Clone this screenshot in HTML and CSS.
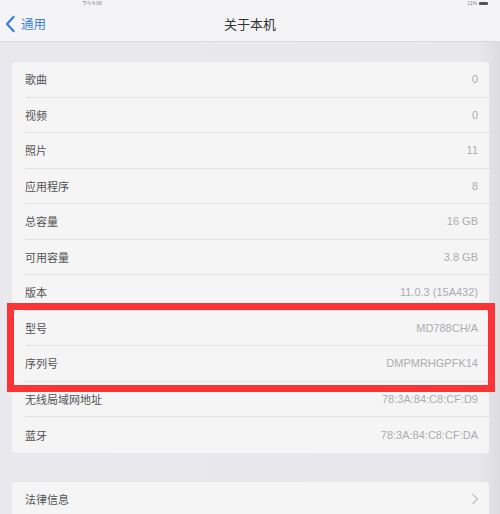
FILE: index.html
```html
<!DOCTYPE html>
<html lang="zh">
<head>
<meta charset="utf-8">
<link rel="stylesheet" href="styles.css">
</head>
<body>
<div class="screen">
  <div class="status">
    <span class="st-left">下午4:08</span>
    <span class="st-right">11% <i class="battery"></i></span>
  </div>
  <header class="nav">
    <div class="back">
      <svg class="chev" width="12" height="18" viewBox="0 0 12 18"><path d="M9.5 2 L3 9 L9.5 16" fill="none" stroke="#3f7fdc" stroke-width="2.4" stroke-linecap="round" stroke-linejoin="round"/></svg>
      <span>通用</span>
    </div>
    <div class="title">关于本机</div>
  </header>

  <section class="card">
    <div class="row"><span class="label">歌曲</span><span class="value">0</span></div>
    <div class="row"><span class="label">视频</span><span class="value">0</span></div>
    <div class="row"><span class="label">照片</span><span class="value">11</span></div>
    <div class="row"><span class="label">应用程序</span><span class="value">8</span></div>
    <div class="row"><span class="label">总容量</span><span class="value">16 GB</span></div>
    <div class="row"><span class="label">可用容量</span><span class="value">3.8 GB</span></div>
    <div class="row"><span class="label">版本</span><span class="value">11.0.3 (15A432)</span></div>
    <div class="row"><span class="label">型号</span><span class="value">MD788CH/A</span></div>
    <div class="row"><span class="label">序列号</span><span class="value">DMPMRHGPFK14</span></div>
    <div class="row"><span class="label">无线局域网地址</span><span class="value">78:3A:84:C8:CF:D9</span></div>
    <div class="row last"><span class="label">蓝牙</span><span class="value">78:3A:84:C8:CF:DA</span></div>
  </section>

  <section class="card card2">
    <div class="row last"><span class="label">法律信息</span>
      <svg class="arrow" width="8" height="12" viewBox="0 0 8 12"><path d="M2 1.5 L6.5 6 L2 10.5" fill="none" stroke="#c6c6ca" stroke-width="1.5" stroke-linecap="round" stroke-linejoin="round"/></svg>
    </div>
  </section>

  <div class="highlight"></div>
</div>
</body>
</html>
```

FILE: styles.css
```css
html, body {
  margin: 0;
  padding: 0;
}
body {
  width: 500px;
  height: 514px;
  overflow: hidden;
  background: #e8e8ec;
  font-family: "Noto Sans CJK SC", "Noto Sans", sans-serif;
}
.screen {
  position: relative;
  width: 500px;
  height: 514px;
  overflow: hidden;
  background: linear-gradient(to right, #e9e9ed 0%, #e8e8ec 96%, #dcdce0 100%);
}
.status {
  height: 6px;
  background: #f4f4f6;
  display: flex;
  justify-content: space-between;
  align-items: center;
  font-family: "Liberation Sans", "Noto Sans CJK SC", sans-serif;
  font-size: 5px;
  line-height: 6px;
  color: #8a8a8e;
  padding: 0 12px 0 82px;
}
.st-right {
  display: flex;
  align-items: center;
  gap: 2px;
}
.battery {
  display: block;
  width: 9px;
  height: 3px;
  background: #555;
  border-radius: 1px;
}
.nav {
  height: 35px;
  background: #f4f4f6;
  border-bottom: 1px solid #d9d9dd;
  display: flex;
  align-items: center;
  position: relative;
}
.back {
  display: flex;
  align-items: center;
  gap: 5px;
  padding-left: 4px;
  color: #3f7fdc;
  font-size: 12.5px;
}
.chev {
  display: block;
}
.title {
  position: absolute;
  left: 0;
  right: 0;
  text-align: center;
  font-size: 13px;
  color: #333;
  pointer-events: none;
}
.card {
  margin: 20px 11px 0 12px;
  background: #f5f5f6;
  border-radius: 3px;
}
.card2 {
  margin-top: 29px;
}
.row {
  height: 35.5px;
  display: flex;
  align-items: center;
  justify-content: space-between;
  margin-left: 13px;
  padding-right: 11px;
  border-bottom: 1px solid #e2e2e5;
  box-sizing: border-box;
}
.row.last {
  border-bottom: none;
}
.label {
  font-size: 11px;
  color: #525252;
}
.value {
  font-family: "Liberation Sans", "Noto Sans", sans-serif;
  font-size: 11px;
  color: #acacae;
}
.arrow {
  display: block;
  margin-right: -1px;
}
.highlight {
  position: absolute;
  left: 7px;
  top: 303px;
  width: 488px;
  height: 89px;
  border: 7px solid #fb3535;
  box-sizing: border-box;
}
```
